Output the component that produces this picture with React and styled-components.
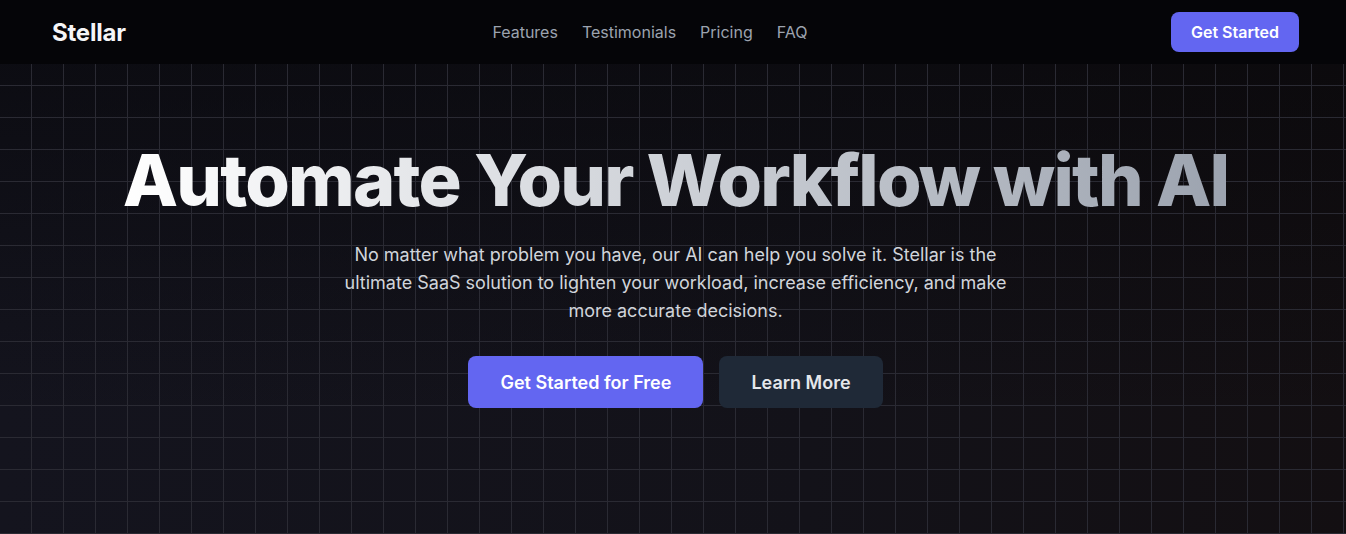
import React from "react";
import styled, { createGlobalStyle } from "styled-components";

const GlobalStyle = createGlobalStyle`
  * { box-sizing: border-box; }
  html, body {
    margin: 0;
    padding: 0;
    background: #050508;
    font-family: Inter, "Noto Sans", "Liberation Sans", sans-serif;
  }
`;

const links = ["Features", "Testimonials", "Pricing", "FAQ"];

function App() {
  return (
    <>
      <GlobalStyle />
      <Page>
        <Header>
          <Logo>Stellar</Logo>
          <Nav>
            {links.map((l) => (
              <NavLink key={l} href="#">{l}</NavLink>
            ))}
          </Nav>
          <Button $small>Get Started</Button>
        </Header>
        <Hero>
          <Title>Automate Your Workflow with AI</Title>
          <Lead>
            No matter what problem you have, our AI can help you solve it. Stellar is the
            ultimate SaaS solution to lighten your workload, increase efficiency, and make
            more accurate decisions.
          </Lead>
          <Actions>
            <Button>Get Started for Free</Button>
            <Button $dark>Learn More</Button>
          </Actions>
        </Hero>
      </Page>
    </>
  );
}

export default App;

const Page = styled.div`
  min-height: 534px;
  display: flex;
  flex-direction: column;
`;

const Header = styled.header`
  height: 64px;
  display: flex;
  align-items: center;
  justify-content: space-between;
  padding: 0 47px 0 52px;
  background: #050508;
`;

const Logo = styled.div`
  color: #f5f5f7;
  font-size: 24px;
  font-weight: 700;
  letter-spacing: -0.2px;
`;

const Nav = styled.nav`
  display: flex;
  gap: 24px;
  margin-left: 3px;
`;

const NavLink = styled.a`
  color: #9ca3af;
  font-size: 16px;
  text-decoration: none;
`;

const Button = styled.button`
  border: none;
  cursor: pointer;
  font-family: inherit;
  font-weight: 600;
  border-radius: 8px;
  color: ${(p) => (p.$dark ? "#e5e7eb" : "#ffffff")};
  background: ${(p) => (p.$dark ? "#1f2937" : "#6366f1")};
  font-size: ${(p) => (p.$small ? "16px" : "18px")};
  height: ${(p) => (p.$small ? "40px" : "52px")};
  padding: ${(p) => (p.$small ? "0 20px" : "0 32px")};
`;

const Hero = styled.section`
  flex: 1;
  min-height: 470px;
  padding: 80px 0 0 5px;
  display: flex;
  flex-direction: column;
  align-items: center;
  text-align: center;
  background-color: #121219;
  background-image:
    linear-gradient(to right, #2a2a33 1px, transparent 1px),
    linear-gradient(to bottom, #2a2a33 1px, transparent 1px),
    linear-gradient(to bottom, rgba(6, 6, 9, 0.55), rgba(6, 6, 9, 0) 75%),
    linear-gradient(to right, #14141e, #131219 60%, #130f12);
  background-size: 32px 32px, 32px 32px, 100% 100%, 100% 100%;
  background-position: 31px 21px, 31px 21px, 0 0, 0 0;
`;

const Title = styled.h1`
  margin: 0;
  display: inline-block;
  font-size: 72px;
  line-height: 72px;
  font-weight: 800;
  letter-spacing: -1.8px;
  background: linear-gradient(to right, #ffffff, #9ca3af);
  -webkit-background-clip: text;
  background-clip: text;
  color: transparent;
`;

const Lead = styled.p`
  margin: 25px 0 0;
  max-width: 672px;
  color: #d1d5db;
  font-size: 18px;
  line-height: 28px;
`;

const Actions = styled.div`
  margin-top: 31px;
  display: flex;
  gap: 16px;
`;
